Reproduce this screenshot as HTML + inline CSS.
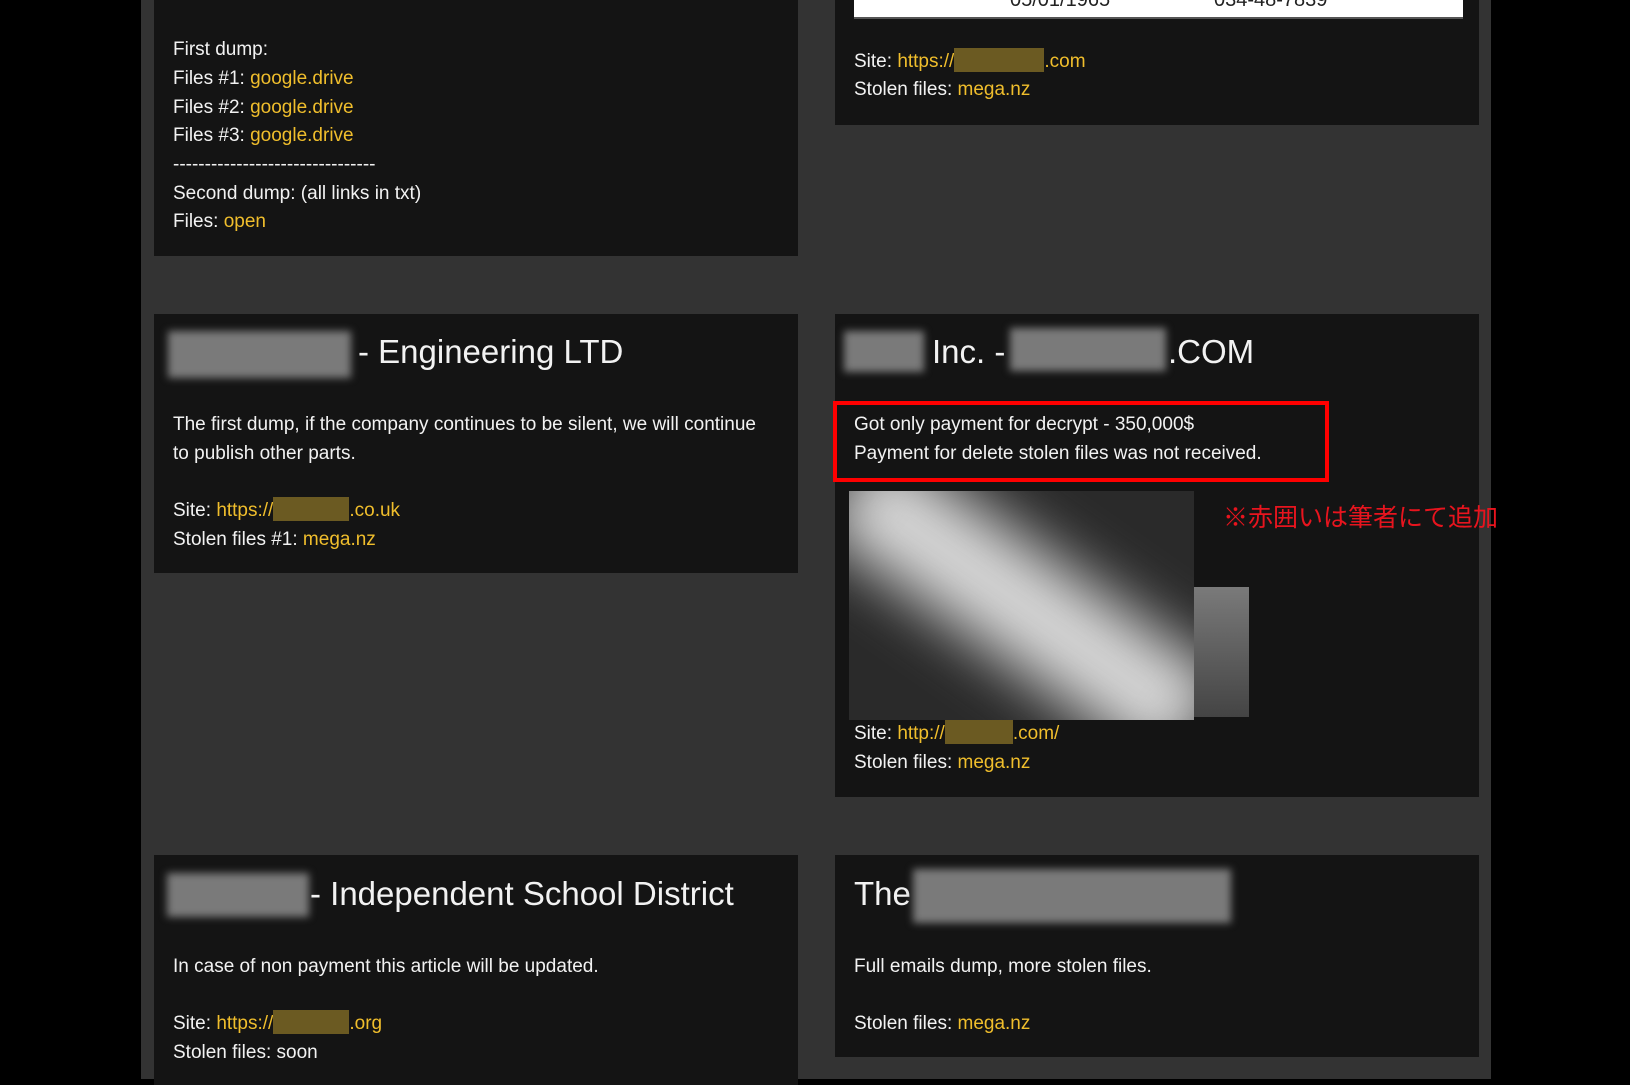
<!DOCTYPE html>
<html><head><meta charset="utf-8"><style>
*{margin:0;padding:0;box-sizing:border-box}
body{width:1630px;height:1079px;background:#000;position:relative;overflow:hidden;font-family:"Liberation Sans",Arial,sans-serif;color:#f2f2f2}
.pg{position:absolute;left:141px;top:0;width:1350px;height:1079px;background:#333}
.c{position:absolute;background:#141414}
.t{position:absolute;font-size:19px;line-height:28px;white-space:nowrap}
.h{position:absolute;font-size:33px;line-height:40px;white-space:nowrap}
.y{color:#f0be2c}
.bl{display:inline-block;background:#6b5a22;height:24px;vertical-align:-5px}
.g{position:absolute;background:#7a7a7a;filter:blur(4px)}
</style></head><body>
<div class="pg"></div>
<div class="c" style="left:154px;top:0;width:644px;height:256px"></div>
<div class="c" style="left:835px;top:0;width:644px;height:125px"></div>
<div style="position:absolute;left:854px;top:0;width:609px;height:19px;background:#fff;border-bottom:2px solid #555"></div>
<div class="t" style="left:1010px;top:-14px;color:#222;font-size:20px">05/01/1965</div>
<div class="t" style="left:1214px;top:-14px;color:#222;font-size:20px">034-48-7839</div>
<div class="c" style="left:154px;top:314px;width:644px;height:259px"></div>
<div class="c" style="left:835px;top:314px;width:644px;height:483px"></div>
<div class="c" style="left:154px;top:855px;width:644px;height:230px"></div>
<div class="c" style="left:835px;top:855px;width:644px;height:202px"></div>

<div class="t" style="left:173px;top:36px">First dump:</div>
<div class="t" style="left:173px;top:65px">Files #1: <span class="y">google.drive</span></div>
<div class="t" style="left:173px;top:94px">Files #2: <span class="y">google.drive</span></div>
<div class="t" style="left:173px;top:122px">Files #3: <span class="y">google.drive</span></div>
<div class="t" style="left:173px;top:151px">--------------------------------</div>
<div class="t" style="left:173px;top:180px">Second dump: (all links in txt)</div>
<div class="t" style="left:173px;top:208px">Files: <span class="y">open</span></div>

<div class="t" style="left:854px;top:48px">Site: <span class="y">https://<span class="bl" style="width:90px"></span>.com</span></div>
<div class="t" style="left:854px;top:76px">Stolen files: <span class="y">mega.nz</span></div>

<div class="g" style="left:168px;top:331px;width:183px;height:47px"></div>
<div class="h" style="left:358px;top:332px">- Engineering LTD</div>
<div class="t" style="left:173px;top:411px">The first dump, if the company continues to be silent, we will continue</div>
<div class="t" style="left:173px;top:440px">to publish other parts.</div>
<div class="t" style="left:173px;top:497px">Site: <span class="y">https://<span class="bl" style="width:76px"></span>.co.uk</span></div>
<div class="t" style="left:173px;top:526px">Stolen files #1: <span class="y">mega.nz</span></div>

<div class="g" style="left:844px;top:331px;width:80px;height:41px"></div>
<div class="h" style="left:932px;top:332px">Inc. -</div>
<div class="g" style="left:1010px;top:328px;width:156px;height:43px"></div>
<div class="h" style="left:1168px;top:332px">.COM</div>
<div style="position:absolute;left:833px;top:401px;width:496px;height:81px;border:4px solid #f00"></div>
<div class="t" style="left:854px;top:411px">Got only payment for decrypt - 350,000$</div>
<div class="t" style="left:854px;top:440px">Payment for delete stolen files was not received.</div>
<div style="position:absolute;left:849px;top:491px;width:345px;height:229px;overflow:hidden;background:#2a2a2a">
<div style="position:absolute;left:-40px;top:60px;width:430px;height:110px;background:#d6d6d6;transform:rotate(35deg);filter:blur(30px)"></div>
</div>
<div style="position:absolute;left:1194px;top:587px;width:55px;height:130px;background:linear-gradient(#7a7a7a,#444)"></div>
<div style="position:absolute;left:1223px;top:502px;font-size:25px;line-height:32px;color:#e8141e;font-family:'Liberation Sans','Noto Sans CJK JP',sans-serif;white-space:nowrap">※赤囲いは筆者にて追加</div>
<div class="t" style="left:854px;top:720px">Site: <span class="y">http://<span class="bl" style="width:68px"></span>.com/</span></div>
<div class="t" style="left:854px;top:749px">Stolen files: <span class="y">mega.nz</span></div>

<div class="g" style="left:167px;top:873px;width:142px;height:44px"></div>
<div class="h" style="left:310px;top:874px">- Independent School District</div>
<div class="t" style="left:173px;top:953px">In case of non payment this article will be updated.</div>
<div class="t" style="left:173px;top:1010px">Site: <span class="y">https://<span class="bl" style="width:76px"></span>.org</span></div>
<div class="t" style="left:173px;top:1039px">Stolen files: soon</div>

<div class="h" style="left:854px;top:874px">The</div>
<div class="g" style="left:913px;top:869px;width:318px;height:54px"></div>
<div class="t" style="left:854px;top:953px">Full emails dump, more stolen files.</div>
<div class="t" style="left:854px;top:1010px">Stolen files: <span class="y">mega.nz</span></div>
</body></html>
